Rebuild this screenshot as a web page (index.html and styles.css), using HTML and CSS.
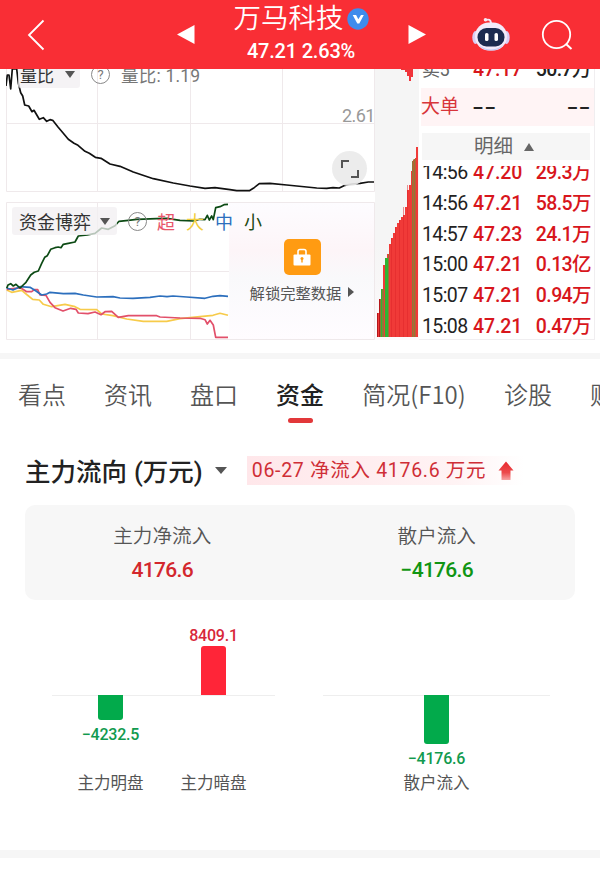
FILE: index.html
```html
<!DOCTYPE html>
<html lang="zh-CN">
<head>
    <meta charset="UTF-8">
    <meta name="viewport" content="width=device-width, initial-scale=1.0">
    <title>万马科技</title>
    <link rel="stylesheet" href="styles.css">
</head>
<body>
    <header class="header">
        <svg class="back" width="18" height="32" viewBox="0 0 18 32"><path d="M16.5 1.5L2 16l14.5 14.5" fill="none" stroke="#fff" stroke-width="1.800"/></svg>
        <svg width="18" height="20" viewBox="0 0 18 20"><path d="M0 9.500L17.500 0v19z" fill="#fff"/></svg>
        <div class="stock">
            <div class="stock-name">
                <span>万马科技</span>
                <svg width="22" height="22" viewBox="0 0 22 22"><circle cx="11" cy="11" r="10.700" fill="#3f8cec"/><path d="M5.700 7h3.400l2.200 4.300L14 7h2.800l-4.500 8.500h-2z" fill="#fff"/></svg>
            </div>
            <div class="stock-price">47.21 2.63%</div>
        </div>
        <svg width="18" height="20" viewBox="0 0 18 20"><path d="M18 9.500L.5 0v19z" fill="#fff"/></svg>
        <svg class="robot" width="40" height="36" viewBox="0 0 40 36">
            <path d="M14.500 3.200q5-2 5.500 3" fill="none" stroke="#f3e6f6" stroke-width="2"/>
            <circle cx="14.500" cy="2.800" r="1.800" fill="#f7e9f4"/>
            <ellipse cx="4.500" cy="20.500" rx="3.200" ry="6.500" fill="#d9cdf5"/>
            <ellipse cx="35.500" cy="20.500" rx="3.200" ry="6.500" fill="#d9cdf5"/>
            <rect x="4" y="5.500" width="32" height="28" rx="14" fill="#f3eafa"/>
            <path d="M8 28q12 9 24 0q-4 5.500-12 5.500t-12-5.500z" fill="#bfc8f8"/>
            <rect x="6.500" y="11" width="27" height="18.500" rx="9" fill="#1c2b50"/>
            <rect x="14" y="16" width="3.500" height="8" rx="1.600" fill="#fff"/>
            <rect x="23.500" y="16" width="3.500" height="8" rx="1.600" fill="#fff"/>
        </svg>
        <svg width="32" height="32" viewBox="0 0 32 32"><circle cx="15.500" cy="15.500" r="13.700" fill="none" stroke="#fff" stroke-width="1.800"/><path d="M25 25l5.500 5" stroke="#fff" stroke-width="2"/></svg>
    </header>

    <section class="market">
        <div class="charts">
            <div class="chart">
                <svg width="369" height="123" viewBox="6 69 369 123">
                    <path d="M6.500 69V191.500H374.500V69M97.500 69V191M190.500 69V191M282.500 69V191M6 123.500H374" fill="none" stroke="#efe9eb"/>
                    <polyline class="line black" points="6,86 7.300,75 9,75 10.700,89 12.300,69 16.700,69 18.300,83 20.700,92.700 22.700,96 24.700,105 28.700,106 32,111.700 34,110.300 39.300,119.300 43.300,117.700 46.700,121.300 50,119.700 52.700,120.300 58,127 63.300,133.300 68.300,139.300 74,143.300 78,145.300 85,151.300 89.300,153.300 95.300,157.300 101,158.300 110,164 120,166.300 133.300,172 153.300,178.700 173.300,183 190,186 205,188.300 215,187.700 230,189.700 236.700,190.700 249.300,190.700 253.300,188.300 259.300,183.700 270,183.300 286.700,185 316.700,188 326.700,188.300 333,187.700 339.300,188 345,185.300 351.700,184 360,183.300 368.300,182 374,182"/>
                </svg>
                <div class="toolbar toolbar-top">
                    <span class="picker">量比 <i class="caret"></i></span>
                    <span class="help">?</span>
                    <span class="ratio">量比: 1.19</span>
                </div>
                <span class="axis-label">2.61</span>
                <span class="expand">
                    <svg width="20" height="20" viewBox="0 0 20 20"><path d="M2 9V2h7M18 11v7h-7" fill="none" stroke="#555" stroke-width="2"/></svg>
                </span>
            </div>

            <div class="chart">
                <svg width="369" height="138" viewBox="6 202 369 138">
                    <path d="M6.500 202.500H374.500V339.500H6.500zM97.500 202V339M190.500 202V339M6 271.500H374" fill="none" stroke="#efe9eb"/>
                    <polyline class="line yellow" points="6.700,290 11.700,292.300 21.700,290.300 27.300,295 32.700,299.300 39.300,300 43.300,304.300 51.700,306.700 65,304.300 75,306.700 80,309.300 96.700,309.700 101.700,314 113,315.700 126.700,319 143.300,321.300 166.700,321.300 180,318.700 200,316.700 213,315.300 220,313.300 228,315.300"/>
                    <polyline class="line pink" points="6.700,289.300 15,288.300 21,288 26.700,291.700 31.700,291.700 34.300,289.700 37.700,289.700 40,295 46,295.300 50,302.300 55,307.700 63,311 70.700,308.300 76,309.300 78.300,313 88,313.700 95,312 101,314.700 105,311.700 111.700,311.300 115,314.300 118.300,317.300 128.300,315.700 156.700,315.700 160,317 180,318 200,318.300 205,319.700 207.300,324 210,320.300 213.300,325 215.700,337.300 228,337.300"/>
                    <polyline class="line blue" points="6.700,288 13,290 20,286.700 30,287.300 36,291 41.700,295 46.700,294 50,292.300 63.300,293.700 75,293.300 83.300,295 96.700,297 113,296.700 120,298 133,298.300 150,297.300 160,296 167,296.700 173,296 186.700,297 205,298.300 213,296.300 220,295.700 228,296.300"/>
                    <polyline class="line green" points="6.700,288.300 8,285 10.700,283.700 13.300,286 16,284.300 20,288 26,282.300 30.700,275 34.300,272.300 38.300,271 41.700,263.300 44.700,257.300 47.300,255.700 50.700,249.300 55,247.700 58.300,247 61,247.700 63.300,244.300 68.300,243.300 75,242 78.300,236 87.300,235 95,233.300 101.700,228 108.300,229.300 115,225.700 119,221.300 128.300,220.300 136.700,219.300 156.700,218.700 166.700,218.300 180,220.300 193.300,221 200,219.300 205,219.700 207.300,215.300 209.300,220 211.700,216 213.300,219.700 215.700,207.700 220,206.700 224,204.700 228,204.300"/>
                </svg>
                <div class="unlock">
                    <span class="lock">
                        <svg width="18" height="18" viewBox="0 0 18 18"><path d="M5 8V3.500Q5 1.500 7 1.500h4q2 0 2 2V8" fill="none" stroke="#fff" stroke-width="1.600"/><rect x=".5" y="6.500" width="17" height="11" rx="1" fill="#fff"/><circle cx="9" cy="10.500" r="1.500" fill="#ff9c12"/><path d="M8.300 10h1.400v4.500H8.300z" fill="#ff9c12"/></svg>
                    </span>
                    <span class="unlock-text">解锁完整数据 <i class="caret-right"></i></span>
                </div>
                <div class="toolbar toolbar-fund">
                    <span class="picker">资金博弈 <i class="caret"></i></span>
                    <span class="help">?</span>
                    <div class="legend">
                        <span class="c-pink">超</span>
                        <span class="c-yellow">大</span>
                        <span class="c-blue">中</span>
                        <span class="c-green">小</span>
                    </div>
                </div>
            </div>
        </div>

        <svg class="depth" width="44" height="271" viewBox="375 69 44 271">
            <!-- sell side -->
            <path d="M401 69h6v1h-6zM405 69h8v3h-8zM407 69h6v7h-6zM409 69h4v8h-4zM409 76h2v5h-2z" fill="#f0343a"/>
            <!-- buy side -->
            <path d="M377 337V313h2V299h2V289h2V265h2V258h2V254h2V244h2V238h2V233h2V227h2V223h2V220h2V217h2V215h2V207h2V190h2V185h2V171h2V160h2V158h1V147h2V337z" fill="#f03a38"/>
            <path d="M377 313h1v24h-1zM379 299h1v38h-1z" fill="#b5161a"/>
            <path d="M381 289h1v48h-1zM385 258h3v79h-3z" fill="#2fb433"/>
            <path d="M380 299h1v38h-1zM382 289h2v48h-2zM388 254h1v83h-1zM412 161h1v176h-1zM413.500 159h2v178h-2z" fill="#8e7a35"/>
            <path d="M391.500 238v99M395.500 227v110M399.500 220v117M403.500 207v130M407.500 185v152" stroke="#df2529" stroke-width=".5"/>
        </svg>

        <div class="quotes">
            <div class="clip clip-sell">
                <div class="row"><span class="time side">卖5</span><span class="price">47.17</span><span class="vol dark">50.7万</span></div>
            </div>
            <div class="big-order"><span>大单</span><span class="dash">--</span><span class="dash last">--</span></div>
            <div class="detail-title">明细 <i class="caret-up"></i></div>
            <div class="clip clip-list">
                <div class="row"><span class="time">14:56</span><span class="price">47.20</span><span class="vol">29.3万</span></div>
            </div>
            <div class="row"><span class="time">14:56</span><span class="price">47.21</span><span class="vol">58.5万</span></div>
            <div class="row"><span class="time">14:57</span><span class="price">47.23</span><span class="vol">24.1万</span></div>
            <div class="row"><span class="time">15:00</span><span class="price">47.21</span><span class="vol">0.13亿</span></div>
            <div class="row"><span class="time">15:07</span><span class="price">47.21</span><span class="vol">0.94万</span></div>
            <div class="row"><span class="time">15:08</span><span class="price">47.21</span><span class="vol">0.47万</span></div>
        </div>
    </section>

    <nav class="tabs">
        <a>看点</a>
        <a>资讯</a>
        <a>盘口</a>
        <a class="active">资金</a>
        <a class="f10">简况(F10)</a>
        <a>诊股</a>
        <a>财务</a>
    </nav>

    <section class="flow">
        <div class="flow-head">
            <h2>主力流向<span>(万元)</span></h2>
            <i class="caret big"></i>
            <div class="flow-badge">
                <span>06-27 净流入 4176.6 万元</span>
                <svg width="16" height="20" viewBox="0 0 16 20"><defs><linearGradient id="up" x1="0" y1="0" x2="0" y2="1"><stop offset="0" stop-color="#e8292e"/><stop offset=".6" stop-color="#ec4a4c"/><stop offset="1" stop-color="#f6a3a3"/></linearGradient></defs><path d="M8 .5L15.500 9.500H12.500V19h-9V9.500H.5z" fill="url(#up)"/></svg>
            </div>
        </div>

        <div class="card">
            <div><p>主力净流入</p><strong class="red">4176.6</strong></div>
            <div><p>散户流入</p><strong class="green-text">−4176.6</strong></div>
        </div>

        <div class="bars">
            <div class="group">
                <div class="col">
                    <div class="up"></div>
                    <div class="down"><i class="bar" style="height: 25px"></i><b>−4232.5</b></div>
                    <span class="cat">主力明盘</span>
                </div>
                <div class="col">
                    <div class="up"><b>8409.1</b><i class="bar" style="height: 49px"></i></div>
                    <div class="down"></div>
                    <span class="cat">主力暗盘</span>
                </div>
            </div>
            <div class="group">
                <div class="col">
                    <div class="up"></div>
                    <div class="down"><i class="bar" style="height: 49px"></i><b>−4176.6</b></div>
                    <span class="cat">散户流入</span>
                </div>
            </div>
        </div>
    </section>
</body>
</html>
```
FILE: styles.css
```css
* {
    box-sizing: border-box;
}

body {
    margin: 0;
    width: 600px;
    height: 880px;
    overflow: hidden;
    background: #fff;
    color: #222;
    font-family: Roboto, "Noto Sans CJK SC", sans-serif;
}

svg {
    display: block;
}

/* header */
.header {
    display: grid;
    grid-template-columns: 156px 60px 170px 62px 86px 46px;
    justify-items: center;
    align-items: center;
    height: 69px;
    background: #f92e35;
    color: #fff;
}

.back {
    justify-self: start;
    margin-left: 27px;
}

.stock {
    display: flex;
    flex-direction: column;
    align-items: center;
}

.stock-name {
    display: flex;
    align-items: center;
    gap: 3px;
    height: 35px;
    font-size: 27.5px;
    font-weight: 350;
    line-height: 34px;
    white-space: nowrap;
}

.stock-price {
    height: 32px;
    line-height: 31px;
    font-size: 20px;
    font-weight: 500;
    letter-spacing: -0.2px;
    white-space: nowrap;
}

/* charts and quotes */
.market {
    display: grid;
    grid-template-columns: 369px 44px 176px;
    height: 290px;
    padding-left: 6px;
    border-bottom: 6px solid #f6f6f6;
}

.charts {
    display: flex;
    flex-direction: column;
    gap: 10px;
}

.chart {
    position: relative;
    overflow: hidden;
}

.line {
    fill: none;
    stroke-width: 1.7;
    stroke-linejoin: round;
}

.black { stroke: #111; }
.yellow { stroke: #f7cb4a; }
.pink { stroke: #e2506a; }
.blue { stroke: #2c6fbd; }
.green { stroke: #0c4a14; }

.toolbar {
    position: absolute;
    left: 6px;
    display: flex;
    align-items: center;
    height: 28px;
}

.toolbar-top {
    top: -9px;
    left: 12px;
    font-size: 17px;
}

.toolbar-fund {
    top: 5px;
    font-size: 18px;
}

.picker {
    display: flex;
    align-items: center;
    gap: 9px;
    height: 28px;
    padding: 0 7px 0 7px;
    border-radius: 3px;
    background: rgba(241, 239, 242, 0.75);
    color: #333;
}

.toolbar-top .picker {
    gap: 11px;
    padding: 0 5px 0 2px;
}

.caret {
    border: 5px solid transparent;
    border-top: 7px solid #555;
    border-bottom: 0;
}

.caret.big {
    border-width: 7px 6px 0;
    margin-left: 12px;
}

.caret-up {
    border: 5.5px solid transparent;
    border-bottom: 8px solid #666;
    border-top: 0;
}

.caret-right {
    border: 5px solid transparent;
    border-left: 6px solid #555;
    border-right: 0;
}

.help {
    width: 19px;
    height: 19px;
    margin-left: 11px;
    border: 1.5px solid #888;
    border-radius: 50%;
    color: #777;
    font-size: 13px;
    line-height: 17px;
    text-align: center;
}

.ratio {
    margin-left: 11px;
    color: #777;
    font-size: 17.5px;
    letter-spacing: 0.2px;
}

.legend {
    display: flex;
    gap: 11px;
    margin-left: 10px;
}

.c-pink { color: #e8566c; }
.c-yellow { color: #f1cd3c; }
.c-blue { color: #2c6fbd; }
.c-green { color: #1d4a10; }

.axis-label {
    position: absolute;
    right: 0;
    top: 36px;
    color: #999;
    font-size: 18px;
    line-height: 22px;
    letter-spacing: -0.5px;
}

.expand {
    position: absolute;
    left: 326px;
    top: 82px;
    display: grid;
    place-items: center;
    width: 35px;
    height: 35px;
    border-radius: 50%;
    background: rgba(234, 234, 234, 0.9);
}

.unlock {
    position: absolute;
    top: 1px;
    left: 223px;
    display: flex;
    flex-direction: column;
    align-items: center;
    width: 145px;
    height: 136px;
    padding-top: 36px;
    background: linear-gradient(#fdfcff, #fdf5f8 35%, #f9f9fb 55%, #fffcff);
}

.lock {
    display: grid;
    place-items: center;
    width: 37px;
    height: 36px;
    margin-left: 1px;
    border-radius: 5px;
    background: #ff9b12;
}

.unlock-text {
    display: flex;
    align-items: center;
    gap: 7px;
    margin-top: 6px;
    margin-left: 1px;
    color: #555;
    font-size: 15.3px;
    white-space: nowrap;
}

.depth {
    background: linear-gradient(#f5f5f5 65%, #fdf9fb);
}

.quotes {
    height: 271px;
    padding-left: 2px;
    border-right: 1px solid #f0eef0;
    border-bottom: 1px solid #f0eef0;
    overflow: hidden;
}

.row {
    display: grid;
    grid-template-columns: 51px 56px 1fr;
    align-items: baseline;
    height: 30.7px;
    padding: 0 3px 0 1px;
    font-size: 19.5px;
    line-height: 33px;
    letter-spacing: -0.6px;
    white-space: nowrap;
}

.side {
    color: #666;
    font-size: 18px;
}

.price {
    color: #d8161c;
    font-weight: 500;
    letter-spacing: -0.1px;
}

.vol {
    color: #d8161c;
    text-align: right;
    font-weight: 500;
    letter-spacing: -0.6px;
}

.dark {
    color: #222;
}

/* rows scrolled partly out of their list */
.clip {
    display: flex;
    flex-direction: column;
    justify-content: flex-end;
    overflow: hidden;
}

.clip .row {
    flex-shrink: 0;
}

.clip-sell {
    height: 15px;
    margin-bottom: 4px;
}

.clip-list {
    height: 21px;
    margin-top: 6px;
}

.big-order {
    display: grid;
    grid-template-columns: 52px 1fr 25px;
    align-items: center;
    height: 38px;
    background: #fff4f5;
    color: #d8353a;
    font-size: 19px;
    line-height: 34px;
}

.dash {
    color: #222;
    font-size: 26px;
    line-height: 28px;
    letter-spacing: 1.5px;
    transform: scaleX(1.4);
    transform-origin: left;
}

.dash.last {
    transform-origin: 4px;
}

.detail-title {
    display: flex;
    justify-content: center;
    align-items: center;
    gap: 11px;
    height: 27px;
    margin: 7px 4px 0 1px;
    padding-right: 4px;
    background: #f6f6f6;
    color: #666;
    font-size: 19.5px;
    line-height: 25px;
}

/* tabs */
.tabs {
    display: flex;
    gap: 38px;
    height: 84px;
    padding: 17px 0 0 18px;
    overflow: hidden;
    color: #555;
    font-family: "Noto Sans CJK SC", sans-serif;
    font-size: 24px;
    font-weight: 350;
    line-height: 36px;
    white-space: nowrap;
}

.tabs a {
    display: flex;
    flex-direction: column;
    align-items: center;
    flex-shrink: 0;
}

.tabs .active {
    color: #222;
    font-weight: 500;
}

.active::after {
    content: "";
    width: 25px;
    height: 5px;
    margin-top: 6px;
    border-radius: 3px;
    background: #e2383a;
}

.f10 {
    width: 104px;
}

/* fund flow */
.flow {
    height: 415px;
    padding: 13px 25px 0;
    border-bottom: 8px solid #f6f6f6;
}

.flow-head {
    display: flex;
    align-items: center;
    height: 29px;
}

h2 {
    margin: 0;
    padding-bottom: 3px;
    font-size: 25.5px;
    font-weight: 500;
    white-space: nowrap;
}

h2 span {
    margin-left: 7px;
}

.flow-badge {
    display: flex;
    align-items: center;
    gap: 12px;
    width: 277px;
    height: 29px;
    margin-left: 20px;
    padding-left: 5px;
    background: linear-gradient(90deg, #ffe7ea, #fff3f4 75%, #fff);
    color: #cf2e36;
    font-size: 19.5px;
    letter-spacing: 0.7px;
    line-height: 28px;
    white-space: nowrap;
}

.card {
    display: grid;
    grid-template-columns: 1fr 1fr;
    height: 95px;
    margin-top: 20px;
    padding: 17px 1px 0 0;
    border-radius: 10px;
    background: #f7f7f7;
    text-align: center;
}

.card p {
    margin: 0;
    color: #555;
    font-size: 19.6px;
    font-weight: 350;
    line-height: 29px;
}

.card strong {
    display: block;
    margin-top: 5px;
    font-size: 21px;
    font-weight: 500;
    letter-spacing: -0.7px;
    line-height: 29px;
}

.red { color: #d3272d; }
.green-text { color: #109512; }

.bars {
    display: grid;
    grid-template-columns: 223px 227px;
    gap: 48px;
    padding: 20px 0 0 27px;
}

.group {
    display: flex;
    justify-content: center;
    height: 180px;
    background: linear-gradient(#eee, #eee) 0 75px / 100% 1px no-repeat;
}

.group:first-child {
    padding-right: 3px;
}

.col {
    display: flex;
    flex-direction: column;
    align-items: center;
    width: 103px;
}

.up,
.down {
    display: flex;
    flex-direction: column;
    align-items: center;
    height: 75px;
}

.up {
    justify-content: flex-end;
    color: #d8273a;
}

.down {
    height: 76px;
    color: #119a4e;
}

.bar {
    width: 25px;
    background: #ff2538;
    border-radius: 3px 3px 0 0;
}

.down .bar {
    background: #02aa4b;
    border-radius: 0 0 3px 3px;
}

.bars b {
    font-size: 16px;
    font-weight: 500;
    letter-spacing: -0.2px;
    line-height: 20px;
}

.down b {
    margin-top: 5px;
}

.cat {
    color: #555;
    font-size: 16.5px;
    line-height: 26px;
}
```
